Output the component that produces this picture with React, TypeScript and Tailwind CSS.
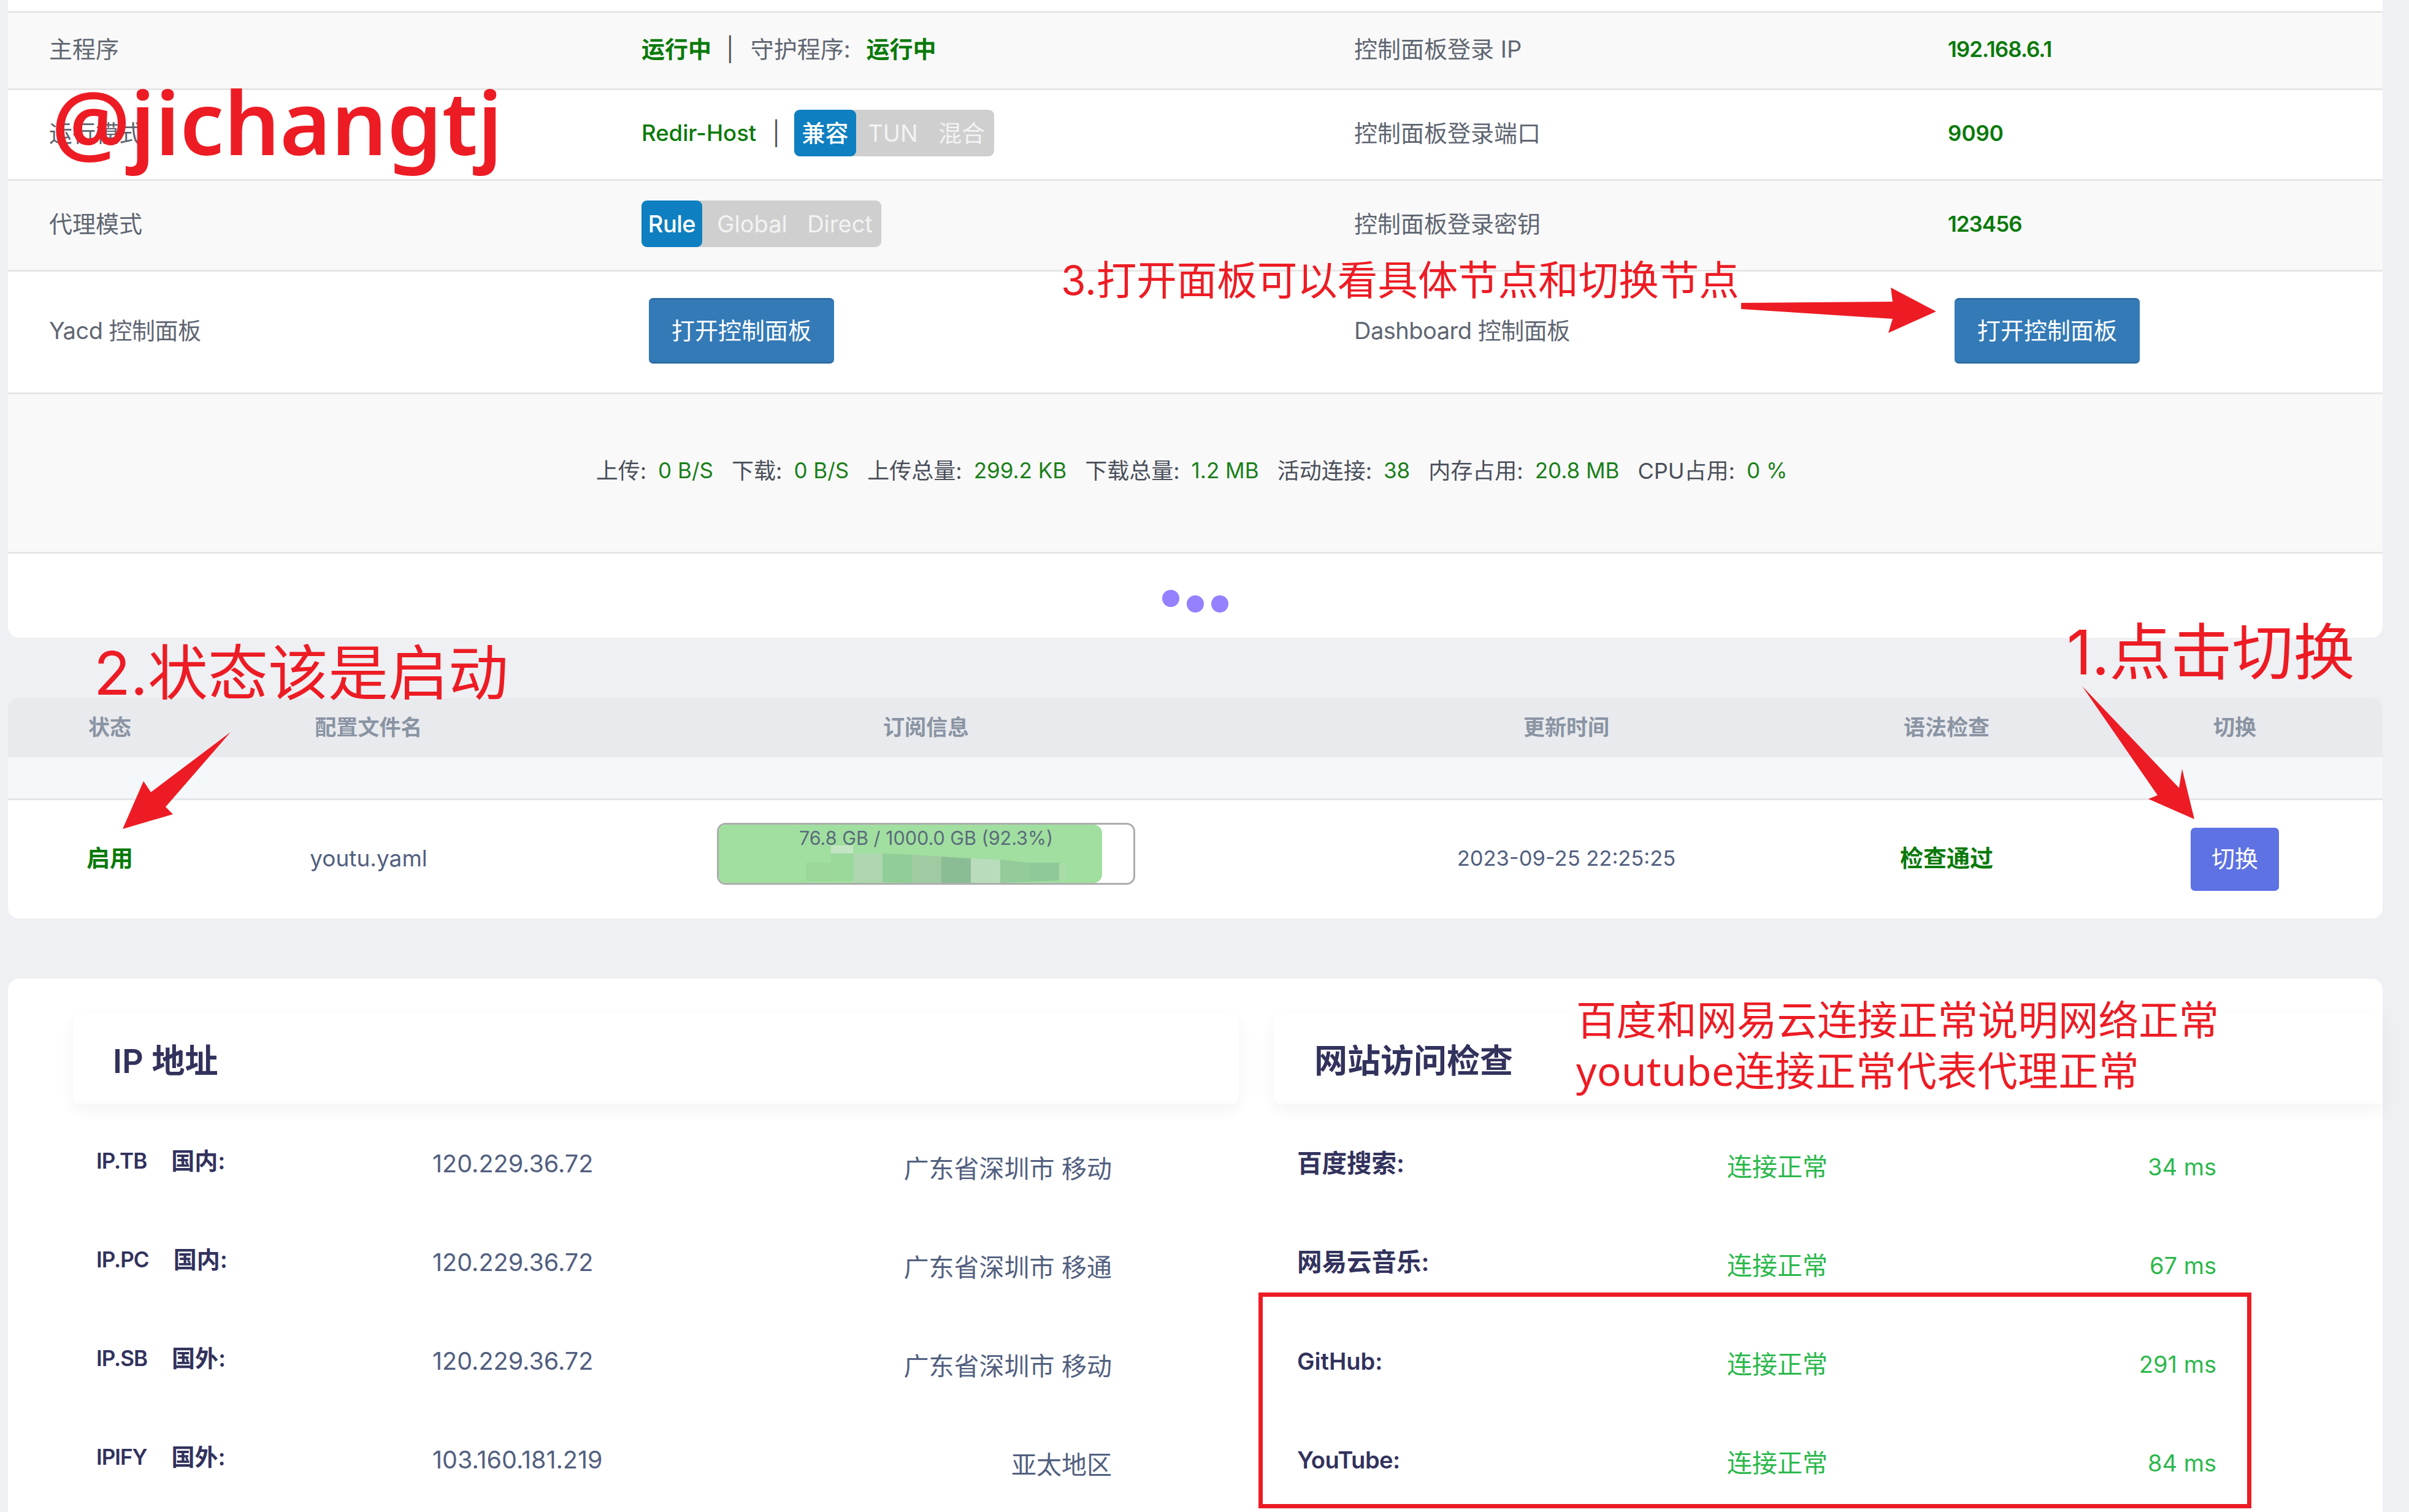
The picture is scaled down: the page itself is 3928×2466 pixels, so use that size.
import React from "react";

const stats = [
  ["上传:", "0 B/S"],
  ["下载:", "0 B/S"],
  ["上传总量:", "299.2 KB"],
  ["下载总量:", "1.2 MB"],
  ["活动连接:", "38"],
  ["内存占用:", "20.8 MB"],
  ["CPU占用:", "0 %"],
];

const ipRows = [
  ["IP.TB", "国内:", "120.229.36.72", "广东省深圳市 移动"],
  ["IP.PC", "国内:", "120.229.36.72", "广东省深圳市 移通"],
  ["IP.SB", "国外:", "120.229.36.72", "广东省深圳市 移动"],
  ["IPIFY", "国外:", "103.160.181.219", "亚太地区"],
];

const siteRows = [
  ["百度搜索:", "连接正常", "34 ms", "text-[40.5px]"],
  ["网易云音乐:", "连接正常", "67 ms", "text-[40.5px]"],
  ["GitHub:", "连接正常", "291 ms", "text-[38px]"],
  ["YouTube:", "连接正常", "84 ms", "text-[38px] tracking-[-0.5px]"],
];

const tableCols = ["w-[332px]", "w-[512px]", "w-[1306px]", "w-[782px]", "w-[458px]", "w-[482px]"];
const tableHead = ["状态", "配置文件名", "订阅信息", "更新时间", "语法检查", "切换"];

function Segmented({ items, first }: { items: string[]; first: string }) {
  return (
    <div className={`flex h-[76px] rounded-[9px] bg-[#cfcfcf] text-[#f3f3f3] ${first === "Rule" ? "w-[391px]" : "w-[326px]"}`}>
      {items.map((t, i) => (
        <span
          key={t}
          className={
            i === 0
              ? `flex items-center justify-center rounded-[9px] bg-[#0e7fc0] font-medium text-white ${first === "Rule" ? "w-[99px] tracking-[-0.5px]" : "w-[101px]"}`
              : `flex items-center justify-center ${first === "Rule" ? (i === 1 ? "w-[157px] pl-[6px]" : "w-[135px]") : "w-[112px] pl-[8px]"}`
          }
        >
          {t}
        </span>
      ))}
    </div>
  );
}

function OpenButton({ className }: { className: string }) {
  return (
    <button className={`flex h-[107px] w-[302px] items-center justify-center rounded-[7px] border-t-[3px] border-b-[3px] border-[#2e6da4] bg-[#337ab7] text-[38px] text-white ${className}`}>
      打开控制面板
    </button>
  );
}

export default function App() {
  return (
    <div className="relative h-[2466px] w-[3928px] overflow-hidden bg-[#eef0f3] font-['Inter','Noto_Sans_CJK_SC',sans-serif] text-[38px] text-[#5f6672]">
      {/* clash status */}
      <div className="ml-[13px] w-[3872px] rounded-b-[18px] bg-white">
        <div className="h-[18px]" />
        <div className="grid h-[126px] grid-cols-[1033px_1162px_968px_1fr] items-center border-t-[3px] border-[#e6e6e6] bg-[#f9f9f9] pb-[5px]">
          <span className="pl-[67px]">主程序</span>
          <div className="flex items-center">
            <b className="font-bold text-[#0a7a0a]">运行中</b>
            <span className="ml-[24px] mr-[27px] text-[#555]">|</span>
            <span>守护程序:</span>
            <b className="ml-[26px] font-bold text-[#0a7a0a]">运行中</b>
          </div>
          <span>控制面板登录 IP</span>
          <span className="text-[35px] font-semibold tracking-[-1px] text-[#0a7a0a]">192.168.6.1</span>
        </div>
        <div className="grid h-[148px] grid-cols-[1033px_1162px_968px_1fr] items-center border-t-[3px] border-[#e6e6e6] pb-[5px]">
          <span className="pl-[67px]">运行模式</span>
          <div className="flex items-center">
            <span className="text-[36.5px] font-medium text-[#0a7a0a]">Redir-Host</span>
            <span className="ml-[26px] mr-[23px] text-[#555]">|</span>
            <Segmented items={["兼容", "TUN", "混合"]} first="兼容" />
          </div>
          <span>控制面板登录端口</span>
          <span className="text-[35px] font-semibold text-[#0a7a0a]">9090</span>
        </div>
        <div className="grid h-[148px] grid-cols-[1033px_1162px_968px_1fr] items-center border-t-[3px] border-[#e6e6e6] bg-[#f9f9f9] pb-[5px]">
          <span className="pl-[67px]">代理模式</span>
          <Segmented items={["Rule", "Global", "Direct"]} first="Rule" />
          <span>控制面板登录密钥</span>
          <span className="text-[35px] font-semibold tracking-[-1px] text-[#0a7a0a]">123456</span>
        </div>
        <div className="grid h-[200px] grid-cols-[1033px_1162px_968px_1fr] items-center border-t-[3px] border-[#e6e6e6] pb-[5px]">
          <span className="pl-[67px] tracking-[-0.5px]">Yacd 控制面板</span>
          <OpenButton className="ml-[12px]" />
          <span className="tracking-[-0.5px]">Dashboard 控制面板</span>
          <OpenButton className="ml-[11px]" />
        </div>
        <div className="flex h-[260px] items-center justify-center gap-[30px] border-t-[3px] border-[#e6e6e6] bg-[#f9f9f9] pb-[8px] pr-[12px] text-[36px]">
          {stats.map(([k, v]) => (
            <span key={k} className="flex gap-[19px]">
              <span className="text-[#4a4f5a]">{k}</span>
              <span className="text-[35px] text-[#1a801a]">{v}</span>
            </span>
          ))}
        </div>
        <div className="flex h-[140px] items-center justify-center gap-[12px] rounded-b-[18px] border-t-[3px] border-[#e6e6e6] pt-[18px]">
          <span className="mb-[10px] size-[28px] rounded-full bg-[#9580ff]" />
          <span className="mt-[8px] size-[28px] rounded-full bg-[#9580ff]" />
          <span className="mt-[8px] size-[28px] rounded-full bg-[#9580ff]" />
        </div>
      </div>

      {/* config table */}
      <div className="ml-[13px] mt-[98px] w-[3872px] rounded-[18px] bg-white">
        <div className="flex h-[97px] items-center rounded-t-[18px] bg-[#e9eaee] text-[35px] font-bold text-[#8a94a3]">
          {tableHead.map((h, i) => (
            <span key={h} className={`${tableCols[i]} text-center`}>{h}</span>
          ))}
        </div>
        <div className="h-[67px] bg-[#f5f8fb]" />
        <div className="flex h-[196px] items-center border-t-[3px] border-[#e3e5e9] text-center text-[#525f7f]">
          <b className={`${tableCols[0]} pb-[4px] font-bold text-[#0a7a0a]`}>启用</b>
          <span className={`${tableCols[1]} pb-[4px] text-[37px]`}>youtu.yaml</span>
          <div className={`${tableCols[2]} flex justify-center pb-[18px]`}>
            <div className="relative h-[101px] w-[682px] overflow-hidden rounded-[14px] border-[3px] border-[#adadad] bg-white">
              <div className="h-full w-[625px] rounded-r-[14px] bg-[#a0df9f]" />
              <span className="absolute inset-x-0 top-0 text-[30.5px] leading-[44px] text-[#5b6b7c]">76.8 GB / 1000.0 GB (92.3%)</span>
              <svg className="absolute left-[142px] top-[34px] h-[64px] w-[440px]" viewBox="0 0 440 64">
                <rect x="0" y="28" width="80" height="30" fill="#9bd79b" />
                <rect x="41" y="0" width="36" height="13" fill="#c3e5c3" />
                <polygon points="41,13 77,13 77,58 41,58" fill="#9ad89b" />
                <polygon points="77,13 125,13 125,60 77,60" fill="#aed7b0" />
                <polygon points="125,13 173,15 173,61 125,60" fill="#90cd97" />
                <polygon points="173,15 221,18 221,64 173,61" fill="#a0cba2" />
                <polygon points="221,18 269,21 269,64 221,64" fill="#8bbd95" />
                <polygon points="269,21 317,23 317,61 269,64" fill="#b8dcbc" />
                <polygon points="317,23 365,28 365,59 317,61" fill="#93cc9a" />
                <polygon points="365,28 413,28 413,57 365,59" fill="#8fc899" />
                <rect x="413" y="28" width="12" height="29" rx="5" fill="#a9dca9" />
              </svg>
            </div>
          </div>
          <span className={`${tableCols[3]} pb-[4px] text-[34.5px]`}>2023-09-25 22:25:25</span>
          <b className={`${tableCols[4]} pb-[4px] font-bold text-[#0a7a0a]`}>检查通过</b>
          <div className={`${tableCols[5]} flex justify-center`}>
            <button className="h-[103px] w-[144px] rounded-[7px] bg-[#5e72e4] pb-[3px] text-[38px] text-white">切换</button>
          </div>
        </div>
      </div>

      {/* ip + site checks */}
      <div className="ml-[13px] mt-[98px] flex h-[900px] w-[3872px] gap-[57px] rounded-[18px] bg-white pl-[106px] pt-[56px] text-[#525f7f]">
        <div className="w-[1901px]">
          <div className="flex h-[148px] items-center rounded-[12px] bg-white pl-[65px] pt-[8px] text-[54px] font-semibold text-[#32325d] shadow-[0_10px_26px_rgba(50,50,93,0.06)]">
            IP 地址
          </div>
          <div className="mt-[18px]">
            {ipRows.map(([a, b, ip, loc]) => (
              <div key={a} className="grid h-[161px] grid-cols-[548px_1fr_auto] items-center pl-[38px] pr-[207px]">
                <span className="flex items-center gap-[40px] pb-[10px] font-semibold text-[#32325d]">
                  <span className="text-[35px] tracking-[-1px]">{a}</span>
                  <span>{b}</span>
                </span>
                <span className="text-[39.5px]">{ip}</span>
                <span className="pt-[16px] text-[41px]">{loc}</span>
              </div>
            ))}
          </div>
        </div>
        <div className="w-[1808px]">
          <div className="flex h-[148px] items-center rounded-l-[12px] bg-white pl-[66px] pt-[8px] text-[54px] font-semibold text-[#32325d] shadow-[0_10px_26px_rgba(50,50,93,0.06)]">
            网站访问检查
          </div>
          <div className="mt-[18px]">
            {siteRows.map(([name, st, ms, size]) => (
              <div key={name} className="grid h-[161px] grid-cols-[701px_1fr_auto] items-center pl-[38px] pr-[271px]">
                <span className={`font-semibold text-[#32325d] ${size}`}>{name}</span>
                <span className="pt-[10px] text-[41px] text-[#2cb84c]">{st}</span>
                <span className="pt-[10px] text-[#2cb84c]">{ms}</span>
              </div>
            ))}
          </div>
        </div>
      </div>

      {/* red annotations drawn over the screenshot */}
      <span className="absolute left-[84px] top-[108px] font-['Noto_Sans',sans-serif] text-[143px] font-semibold leading-[180px] text-[#ed1c24]">@jichangtj</span>
      <span className="absolute left-[1730px] top-[416px] text-[65.5px] leading-[84px] text-[#ed1c24]">3.打开面板可以看具体节点和切换节点</span>
      <span className="absolute left-[153px] top-[1036px] text-[98px] leading-[124px] text-[#ed1c24]">2.状态该是启动</span>
      <span className="absolute left-[3370px] top-[1002px] text-[100px] leading-[124px] text-[#ed1c24]">1.点击切换</span>
      <div className="absolute left-[2570px] top-[1621px] font-['Noto_Sans','Noto_Sans_CJK_SC',sans-serif] text-[65.5px] leading-[83px] text-[#ed1c24]">
        <div>百度和网易云连接正常说明网络正常</div>
        <div className="tracking-[0.5px]">youtube连接正常代表代理正常</div>
      </div>
      <div className="absolute left-[2052px] top-[2108px] h-[352px] w-[1619px] border-[7px] border-[#ed1c24]" />
      <svg className="pointer-events-none absolute inset-0 h-full w-full" viewBox="0 0 3928 2466">
        <polygon points="2839,494 3086,492 3083,469 3157,508 3079,543 3086,520 2839,504" fill="#ed1c24" />
        <polygon points="376,1194 246,1292 234,1274 200,1352 282,1328 270,1316" fill="#ed1c24" />
        <polygon points="3395,1119 3518,1297 3503,1303 3578,1336 3558,1254 3553,1285" fill="#ed1c24" />
      </svg>
    </div>
  );
}
